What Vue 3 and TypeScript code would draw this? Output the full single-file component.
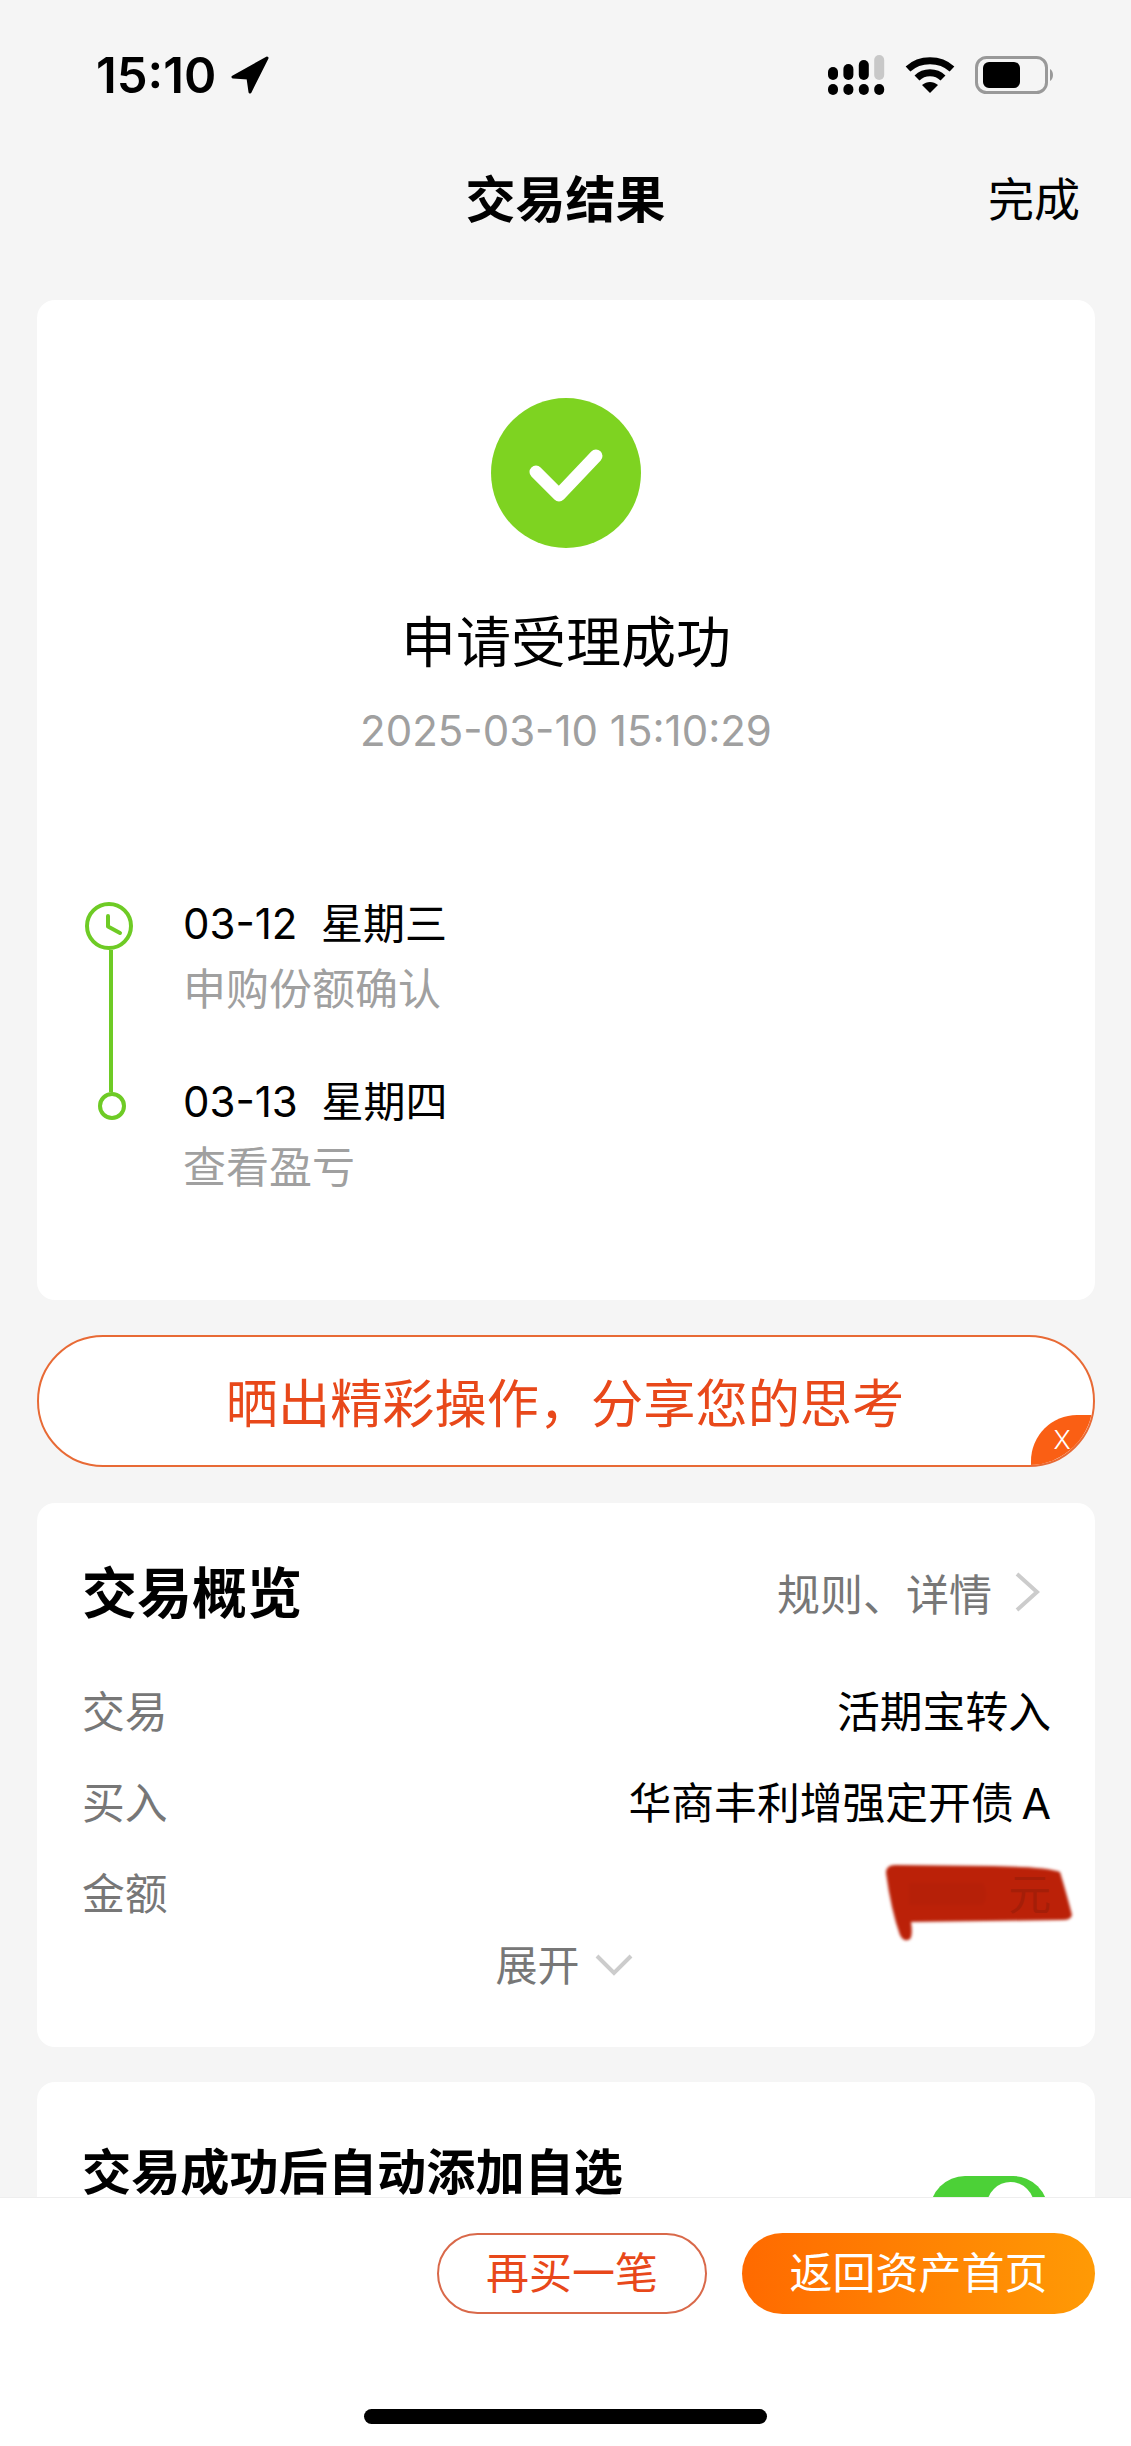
<script setup lang="ts">
interface Row {
  label: string;
  value: string;
}

interface Step {
  date: string;
  week: string;
  desc: string;
}

const steps: Step[] = [
  { date: '03-12', week: '星期三', desc: '申购份额确认' },
  { date: '03-13', week: '星期四', desc: '查看盈亏' }
];

const rows: Row[] = [
  { label: '交易', value: '活期宝转入' },
  { label: '买入', value: '华商丰利增强定开债\u2009A' }
];

const signalTops = [67, 64, 60, 55];
</script>

<template>
  <div class="page">
    <div class="status">
      <div class="status-left">
        <span class="time">15:10</span>
        <svg class="arrow" width="40" height="38" viewBox="0 0 40 38">
          <path d="M37 2 L3 21 L18 22 L20 36 Z" fill="#000" stroke="#000" stroke-width="3" stroke-linejoin="round" />
        </svg>
      </div>
      <div class="status-right">
        <svg width="57" height="40" viewBox="0 0 57 40">
          <g v-for="(top, i) in signalTops" :key="i">
            <rect :x="i * 15.4" :y="top - 55" width="10" :height="80 - top" rx="5" :fill="i === 3 ? '#c8c8c8' : '#000'" />
            <rect :x="i * 15.4" y="29" width="10" height="11" rx="5" fill="#000" />
          </g>
        </svg>
        <svg width="50" height="36" viewBox="0 0 50 36" fill="none">
          <path d="M3 12 C15 1 35 1 47 12" stroke="#000" stroke-width="7" />
          <path d="M12 21 C19 14 31 14 38 21" stroke="#000" stroke-width="7" />
          <path d="M25 36 L17 28 C22 24 28 24 33 28 Z" fill="#000" />
        </svg>
        <svg width="80" height="38" viewBox="0 0 80 38" fill="none">
          <rect x="1.5" y="1.5" width="70" height="35" rx="10" stroke="#999" stroke-width="3" />
          <rect x="8" y="6" width="37" height="26" rx="6" fill="#000" />
          <path d="M75 13 C79 15 79 23 75 25 Z" fill="#999" />
        </svg>
      </div>
    </div>

    <div class="nav">
      <span></span>
      <span class="nav-title">交易结果</span>
      <span class="nav-done">完成</span>
    </div>

    <div class="content">
      <section class="card result">
        <svg class="result-icon" width="150" height="150" viewBox="0 0 150 150">
          <circle cx="75" cy="75" r="75" fill="#7ed321" />
          <path d="M45 74 L68 97 L105 58" fill="none" stroke="#fff" stroke-width="13" stroke-linecap="round" stroke-linejoin="round" />
        </svg>
        <div class="result-title">申请受理成功</div>
        <div class="result-time">2025-03-10 15:10:29</div>

        <div class="timeline">
          <div class="rail">
            <svg width="48" height="48" viewBox="0 0 48 48" fill="none">
              <circle cx="24" cy="24" r="22" stroke="#6ecb25" stroke-width="4" />
              <path d="M23 14 V24.5 L35 31" stroke="#6ecb25" stroke-width="4" stroke-linecap="round" stroke-linejoin="round" />
            </svg>
            <div class="rail-line"></div>
            <div class="rail-dot"></div>
          </div>
          <div class="steps">
            <div v-for="step in steps" :key="step.date" class="step">
              <div class="step-date">{{ step.date }}&nbsp;&nbsp;{{ step.week }}</div>
              <div class="step-desc">{{ step.desc }}</div>
            </div>
          </div>
        </div>
      </section>

      <div class="banner">
        <span>晒出精彩操作，分享您的思考</span>
        <div class="banner-close">X</div>
      </div>

      <section class="card overview">
        <div class="overview-head">
          <span class="overview-title">交易概览</span>
          <span class="overview-link">
            规则、详情
            <svg width="26" height="40" viewBox="0 0 26 40" fill="none">
              <path d="M3 2 L23 20 L3 38" stroke="#ccc" stroke-width="4" />
            </svg>
          </span>
        </div>
        <div class="rows">
          <div v-for="row in rows" :key="row.label" class="row">
            <span class="row-label">{{ row.label }}</span>
            <span class="row-value">{{ row.value }}</span>
          </div>
          <div class="row">
            <span class="row-label">金额</span>
            <svg class="scribble" width="196" height="82" viewBox="-3 -3 196 82">
              <path d="M3 8 Q3 0 12 0 L110 1 Q165 2 177 7 Q184 30 189 50 Q188 55 180 55 L28 57 Q30 70 27 74 Q21 78 17 70 Q8 45 3 8 Z" fill="#bb2108" />
              <path d="M26 18 H100 Q106 30 100 40 H26 Z" fill="#b62008" />
            </svg>
            <span class="row-value row-hidden">元</span>
          </div>
        </div>
        <div class="expand">
          <span>展开</span>
          <svg width="38" height="22" viewBox="0 0 38 22" fill="none">
            <path d="M2 2 L19 19 L36 2" stroke="#ccc" stroke-width="4" />
          </svg>
        </div>
      </section>

      <section class="card auto">
        <span class="auto-title">交易成功后自动添加自选</span>
        <div class="toggle"><div class="toggle-knob"></div></div>
      </section>
    </div>

    <footer class="footer">
      <div class="actions">
        <button class="btn btn-ghost">再买一笔</button>
        <button class="btn btn-main">返回资产首页</button>
      </div>
      <div class="home-bar"></div>
    </footer>
  </div>
</template>

<style scoped>
.page {
  position: relative;
  width: 1131px;
  height: 2446px;
  overflow: hidden;
  background: #f5f5f5;
  color: #000;
  font-family: Inter, "Noto Sans CJK SC", sans-serif;
}

.status {
  display: flex;
  justify-content: space-between;
  align-items: center;
  height: 150px;
  padding: 0 76px 0 96px;
  box-sizing: border-box;
}

.status-left {
  display: flex;
  align-items: center;
  gap: 14px;
}

.time {
  font-size: 49px;
  font-weight: 600;
  line-height: 52px;
  margin-top: 2px;
}

.status-right {
  display: flex;
  align-items: center;
  gap: 20px;
}

.nav {
  display: grid;
  grid-template-columns: 1fr auto 1fr;
  align-items: center;
  height: 92px;
  margin-bottom: 58px;
  padding: 0 51px;
}

.nav-title {
  font-size: 50px;
  font-weight: 700;
}

.nav-done {
  justify-self: end;
  font-size: 46px;
}

.content {
  display: flex;
  flex-direction: column;
  gap: 35px;
  padding: 0 36px 0 37px;
}

.card {
  background: #fff;
  border-radius: 18px;
}

.result {
  display: flex;
  flex-direction: column;
  align-items: center;
  height: 1000px;
  padding-top: 98px;
  box-sizing: border-box;
}

.result-icon {
  flex-shrink: 0;
}

.result-title {
  margin-top: 59px;
  font-size: 55px;
  line-height: 70px;
}

.result-time {
  margin-top: 29px;
  color: #a0a0a0;
  font-size: 42px;
  line-height: 50px;
}

.timeline {
  display: flex;
  align-self: stretch;
  margin-top: 143px;
  padding-left: 48px;
}

.rail {
  display: flex;
  flex-direction: column;
  flex-shrink: 0;
  width: 98px;
  padding-top: 3px;
}

.rail-line {
  width: 4px;
  height: 142px;
  margin-left: 24px;
  background: #6ecb25;
}

.rail-dot {
  width: 28px;
  height: 28px;
  margin-left: 13px;
  border: 4px solid #6ecb25;
  border-radius: 50%;
  box-sizing: border-box;
}

.steps {
  display: flex;
  flex-direction: column;
  gap: 63px;
}

.step {
  display: flex;
  flex-direction: column;
  gap: 15px;
}

.step-date {
  font-size: 42px;
  line-height: 50px;
}

.step-desc {
  color: #a0a0a0;
  font-size: 43px;
  line-height: 50px;
}

.banner {
  position: relative;
  display: flex;
  justify-content: center;
  align-items: center;
  height: 132px;
  margin-bottom: 1px;
  padding: 0 2px 2px 0;
  overflow: hidden;
  background: #fff;
  border: 2px solid #e86a35;
  border-radius: 66px;
  box-sizing: border-box;
  color: #e8481a;
  font-size: 52.2px;
}

.banner-close {
  position: absolute;
  right: 0;
  bottom: 0;
  display: flex;
  justify-content: center;
  align-items: center;
  width: 62px;
  height: 50px;
  background: #fa5f14;
  border-top-left-radius: 46px;
  color: #fff;
  font-size: 26px;
  font-weight: 300;
  line-height: 1;
}

.overview {
  height: 544px;
  padding: 54px 44px 0 45px;
  box-sizing: border-box;
}

.overview-head {
  display: flex;
  justify-content: space-between;
  align-items: center;
  height: 70px;
}

.overview-title {
  margin-bottom: 6px;
  font-size: 55px;
  font-weight: 700;
}

.overview-link {
  display: flex;
  align-items: center;
  gap: 22px;
  color: #777;
  font-size: 43px;
}

.overview-link svg {
  margin-right: 11px;
}

.rows {
  display: flex;
  flex-direction: column;
  gap: 41px;
  margin-top: 61px;
}

.row {
  position: relative;
  display: flex;
  justify-content: space-between;
  height: 50px;
  font-size: 42.8px;
  line-height: 50px;
}

.row-label {
  color: #777;
}

.row-hidden {
  position: relative;
  color: #a51e08;
}

.scribble {
  position: absolute;
  top: -8px;
  right: -25px;
  filter: blur(1.5px);
}

.expand {
  display: flex;
  justify-content: center;
  align-items: center;
  gap: 15px;
  height: 50px;
  margin-top: 17px;
  padding-right: 5px;
  color: #777;
  font-size: 42px;
}

.expand svg {
  margin-top: 5px;
}

.auto {
  display: flex;
  justify-content: space-between;
  align-items: flex-start;
  height: 300px;
  padding: 60px 47px 0 45px;
  box-sizing: border-box;
}

.auto-title {
  font-size: 49.2px;
  font-weight: 700;
  line-height: 60px;
}

.toggle {
  display: flex;
  justify-content: flex-end;
  width: 118px;
  height: 70px;
  margin-top: 34px;
  padding: 6px 14px 0 0;
  background: #4cd137;
  border-radius: 35px;
  box-sizing: border-box;
}

.toggle-knob {
  width: 47px;
  height: 47px;
  background: #fff;
  border-radius: 50%;
}

.footer {
  position: absolute;
  top: 2197px;
  right: 0;
  bottom: 0;
  left: 0;
  display: flex;
  flex-direction: column;
  align-items: center;
  padding-top: 35px;
  background: #fff;
  border-top: 1px solid #eee;
  box-sizing: border-box;
}

.actions {
  display: flex;
  justify-content: flex-end;
  align-self: stretch;
  gap: 35px;
  padding-right: 36px;
}

.btn {
  height: 81px;
  border-radius: 41px;
  box-sizing: border-box;
  font-family: inherit;
  font-size: 43px;
  line-height: 1;
}

.btn-ghost {
  width: 270px;
  background: #fff;
  border: 2px solid #d9694a;
  color: #e8481a;
}

.btn-main {
  width: 353px;
  background: linear-gradient(90deg, #ff6a00, #ff9a05);
  border: 0;
  color: #fff;
}

.home-bar {
  width: 403px;
  height: 15px;
  margin-top: 95px;
  background: #000;
  border-radius: 8px;
}
</style>
